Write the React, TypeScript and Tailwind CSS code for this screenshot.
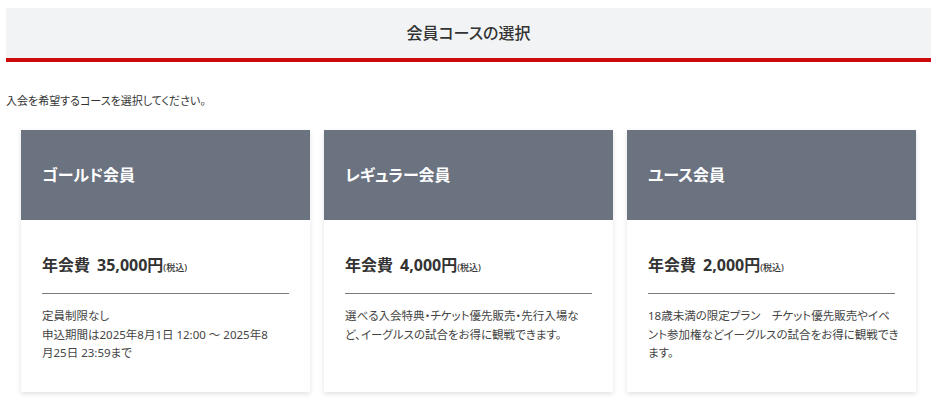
import React from "react";

const cards = [
  {
    name: "ゴールド会員",
    price: "35,000円",
    desc: ["定員制限なし", "申込期間は2025年8月1日 12:00 ～ 2025年8", "月25日 23:59まで"],
  },
  {
    name: "レギュラー会員",
    price: "4,000円",
    desc: ["選べる入会特典・チケット優先販売・先行入場な", "ど、イーグルスの試合をお得に観戦できます。"],
  },
  {
    name: "ユース会員",
    price: "2,000円",
    desc: ["18歳未満の限定プラン　チケット優先販売やイベ", "ント参加権などイーグルスの試合をお得に観戦でき", "ます。"],
  },
];

export default function App() {
  return (
    <div
      className="w-[937px] h-[406px] bg-white overflow-hidden text-[#333] [font-feature-settings:'palt']"
      style={{ fontFamily: '"Noto Sans", "Noto Sans CJK JP", sans-serif' }}
    >
      <div className="pt-[8px] px-[6px]">
        <div className="h-[54px] bg-[#f2f3f5] border-b-[4px] border-[#cc0a0a] flex items-center justify-center">
          <h1 className="text-[16px] font-medium text-[#333] leading-none">会員コースの選択</h1>
        </div>
      </div>
      <p className="mt-[31px] px-[6px] text-[11px] leading-[16px] text-[#333]">入会を希望するコースを選択してください。</p>
      <div className="mt-[21px] px-[21px] grid grid-cols-3 gap-[14px]">
        {cards.map((c) => (
          <div key={c.name} className="bg-white shadow-[0_2px_5px_rgba(0,0,0,0.12)] flex flex-col">
            <div className="h-[90px] bg-[#6b7280] flex items-center px-[21px]">
              <span className="text-white text-[16px] font-bold leading-none">{c.name}</span>
            </div>
            <div className="px-[21px] pt-[35px] pb-[29px] flex-1">
              <div className="flex items-baseline text-[#333]">
                <span className="text-[16px] font-bold leading-[20px]">年会費</span>
                <span className="text-[16px] font-bold leading-[20px] ml-[7px]">{c.price}</span>
                <span className="text-[9px] font-medium">(税込)</span>
              </div>
              <div className="mt-[18px] h-px bg-[#7a7a7a]" />
              <div className="mt-[13px] text-[11.5px] leading-[18.5px] text-[#444] whitespace-nowrap">
                {c.desc.map((d, i) => (
                  <p key={i}>{d}</p>
                ))}
              </div>
            </div>
          </div>
        ))}
      </div>
    </div>
  );
}
